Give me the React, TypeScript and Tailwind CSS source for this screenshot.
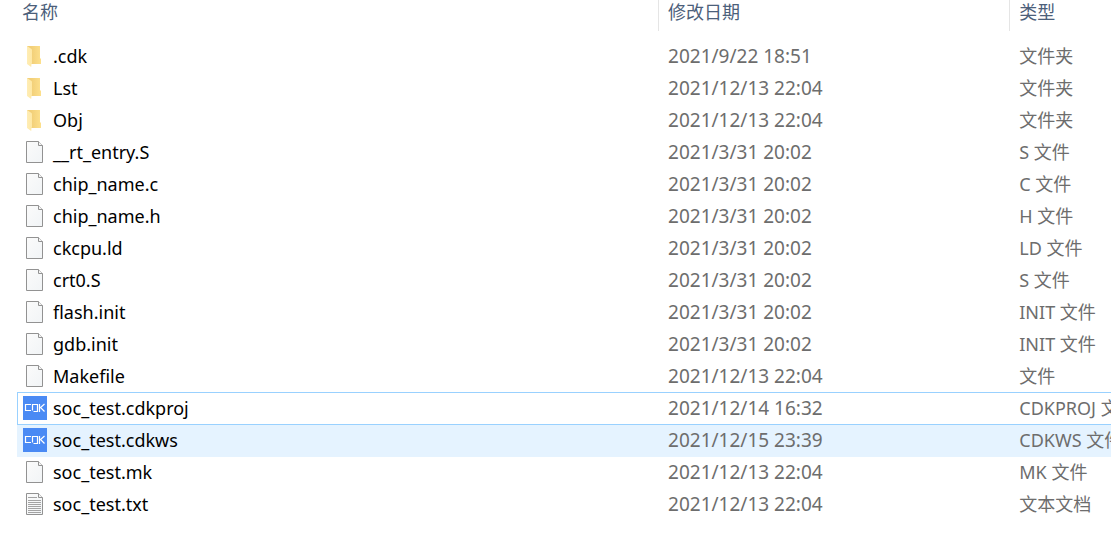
type IconKind = "folder" | "page" | "cdk" | "text";

interface Entry {
  name: string;
  modified: string;
  type: string;
  icon: IconKind;
  state?: "focused" | "hovered";
}

const entries: Entry[] = [
  { name: ".cdk", modified: "2021/9/22 18:51", type: "文件夹", icon: "folder" },
  { name: "Lst", modified: "2021/12/13 22:04", type: "文件夹", icon: "folder" },
  { name: "Obj", modified: "2021/12/13 22:04", type: "文件夹", icon: "folder" },
  { name: "__rt_entry.S", modified: "2021/3/31 20:02", type: "S 文件", icon: "page" },
  { name: "chip_name.c", modified: "2021/3/31 20:02", type: "C 文件", icon: "page" },
  { name: "chip_name.h", modified: "2021/3/31 20:02", type: "H 文件", icon: "page" },
  { name: "ckcpu.ld", modified: "2021/3/31 20:02", type: "LD 文件", icon: "page" },
  { name: "crt0.S", modified: "2021/3/31 20:02", type: "S 文件", icon: "page" },
  { name: "flash.init", modified: "2021/3/31 20:02", type: "INIT 文件", icon: "page" },
  { name: "gdb.init", modified: "2021/3/31 20:02", type: "INIT 文件", icon: "page" },
  { name: "Makefile", modified: "2021/12/13 22:04", type: "文件", icon: "page" },
  { name: "soc_test.cdkproj", modified: "2021/12/14 16:32", type: "CDKPROJ 文件", icon: "cdk", state: "focused" },
  { name: "soc_test.cdkws", modified: "2021/12/15 23:39", type: "CDKWS 文件", icon: "cdk", state: "hovered" },
  { name: "soc_test.mk", modified: "2021/12/13 22:04", type: "MK 文件", icon: "page" },
  { name: "soc_test.txt", modified: "2021/12/13 22:04", type: "文本文档", icon: "text" },
];

function FolderIcon() {
  return (
    <svg viewBox="0 0 24 24" className="size-6 shrink-0" aria-hidden="true">
      <defs>
        <linearGradient id="folder-back" x1="0" x2="1">
          <stop offset="0.3" stopColor="#f2cf78" />
          <stop offset="1" stopColor="#fde08c" />
        </linearGradient>
        <linearGradient id="folder-front" x1="0" x2="1">
          <stop offset="0" stopColor="#ffedb5" />
          <stop offset="1" stopColor="#fee8a5" />
        </linearGradient>
      </defs>
      <path d="M4 2H17V14L18 15V20H4Z" fill="url(#folder-back)" />
      <path d="M4 2L8.5 5Q9 5.4 9 6V19Q9 19.6 8.5 20L8.2 23L4 20Z" fill="url(#folder-front)" />
    </svg>
  );
}

function PageIcon({ lined = false }: { lined?: boolean }) {
  return (
    <svg viewBox="0 0 24 24" className="size-6 shrink-0" aria-hidden="true">
      <defs>
        <linearGradient id="page-fill" x1="0" y1="0" x2="1" y2="1">
          <stop offset="0" stopColor="#fbfbfb" />
          <stop offset="1" stopColor="#f1f4f6" />
        </linearGradient>
      </defs>
      <path d="M3.5 1.5H15.5L19.5 5.5V22.5H3.5Z" fill="url(#page-fill)" stroke="#929292" />
      <path d="M15.5 1.5V5.5H19.5" fill="#f5f5f5" stroke="#929292" />
      {lined && (
        <path d="M5 5.5H14M5 8.5H18M5 10.5H18M5 12.5H18M5 14.5H18M5 16.5H18M5 18.5H18M5 20.5H18" stroke="#a3a3a3" />
      )}
    </svg>
  );
}

function CdkIcon() {
  return (
    <svg viewBox="0 0 24 24" className="size-6 shrink-0" aria-hidden="true">
      <rect width="24" height="24" fill="#4a8af4" />
      <g fill="none" stroke="#fff" strokeWidth="1.2">
        <path d="M8 8.5H2.5V14.5H8" />
        <path d="M9.5 14.5V8.5H14.5V15.5H10.5" />
        <path d="M16.5 8V16M21.5 8L17.5 11.5L21.5 15.5" />
      </g>
    </svg>
  );
}

function EntryIcon({ kind }: { kind: IconKind }) {
  if (kind === "folder") return <FolderIcon />;
  if (kind === "cdk") return <CdkIcon />;
  return <PageIcon lined={kind === "text"} />;
}

const rowStyles = {
  focused: "shadow-[0_-1px_0_#99d1ff,inset_1px_-1px_0_#99d1ff]",
  hovered: "bg-[#e5f3ff]",
};

export default function App() {
  return (
    <main className="min-h-screen overflow-hidden bg-white pl-[17px] font-['Noto_Sans','Noto_Sans_CJK_SC',sans-serif] text-lg leading-6 text-[#6d6d6d]">
      <table className="w-full table-fixed border-separate border-spacing-0 whitespace-nowrap text-left">
        <colgroup>
          <col className="w-[58.6%]" />
          <col className="w-[32.1%]" />
          <col />
        </colgroup>
        <thead className="text-[#4c607a]">
          <tr>
            <th scope="col" className="p-0 pb-2.5 font-normal">
              <div className="h-[31px] pl-[5px]">名称</div>
            </th>
            <th scope="col" className="p-0 pb-2.5 font-normal">
              <div className="h-[31px] border-l border-[#e5e5e5] pl-[9px]">修改日期</div>
            </th>
            <th scope="col" className="p-0 pb-2.5 font-normal">
              <div className="h-[31px] border-l border-[#e5e5e5] pl-[9px]">类型</div>
            </th>
          </tr>
        </thead>
        <tbody>
          {entries.map((entry) => (
            <tr key={entry.name} className={entry.state && rowStyles[entry.state]}>
              <td className="p-0">
                <div className="flex h-8 items-center gap-1.5 pb-0.5 pl-1.5 text-black">
                  <EntryIcon kind={entry.icon} />
                  <span>{entry.name}</span>
                </div>
              </td>
              <td className="p-0">
                <div className="flex h-8 items-center pb-0.5 pl-2.5 text-[19px]">{entry.modified}</div>
              </td>
              <td className="overflow-hidden p-0">
                <div className="flex h-8 items-center pb-0.5 pl-2.5">{entry.type}</div>
              </td>
            </tr>
          ))}
        </tbody>
      </table>
    </main>
  );
}
